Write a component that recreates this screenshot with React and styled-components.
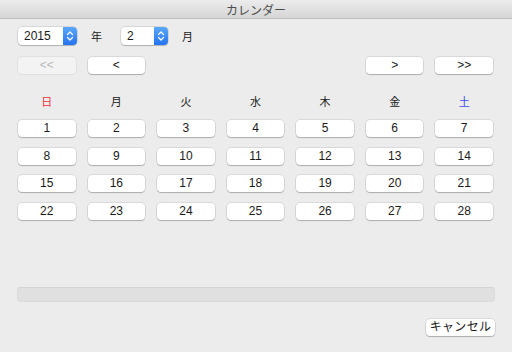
import React from "react";
import styled, { createGlobalStyle } from "styled-components";

const Global = createGlobalStyle`
  html, body { margin: 0; padding: 0; }
  body {
    width: 512px; height: 352px; overflow: hidden;
    background: #ececec;
    font-family: "Liberation Sans", "Noto Sans CJK JP", sans-serif;
    color: #1a1a1a;
  }
`;

const Window = styled.div`
  width: 512px;
  height: 352px;
  display: flex;
  flex-direction: column;
  background: #ececec;
`;

const TitleBar = styled.div`
  height: 18px;
  border-bottom: 1px solid #bdbdbd;
  background: linear-gradient(#ececec, #d6d6d6);
  display: flex;
  align-items: center;
  justify-content: center;
  font-size: 12px;
  color: #4a4a4a;
  flex-shrink: 0;
`;

const Content = styled.div`
  padding: 8px 17px 0 18px;
  display: flex;
  flex-direction: column;
`;

const SelectRow = styled.div`
  display: flex;
  align-items: center;
  height: 18px;
`;

const Select = styled.div`
  width: ${(p) => p.$w}px;
  height: 18px;
  box-sizing: border-box;
  display: flex;
  background: #fff;
  border-radius: 4px;
  box-shadow: 0 0 0 0.5px rgba(0, 0, 0, 0.18), 0 1px 1px rgba(0, 0, 0, 0.18);
  overflow: hidden;
  margin-right: ${(p) => p.$mr}px;
`;

const SelectValue = styled.div`
  flex: 1;
  font-size: 12px;
  line-height: 18px;
  padding-left: 6px;
`;

const Stepper = styled.div`
  width: 14px;
  background: linear-gradient(#5aa8fb, #2473f0);
  display: flex;
  align-items: center;
  justify-content: center;
`;

const Unit = styled.span`
  font-size: 11px;
  margin-right: ${(p) => p.$mr}px;
`;

const NavRow = styled.div`
  margin-top: 12px;
  display: grid;
  grid-template-columns: repeat(7, 1fr);
  column-gap: 12px;
  width: 475px;
`;

const Btn = styled.div`
  height: 17px;
  box-sizing: border-box;
  border-radius: 4px;
  background: ${(p) => (p.$disabled ? "#f3f3f3" : "#fff")};
  color: ${(p) => (p.$disabled ? "#b8b8b8" : "#1a1a1a")};
  box-shadow: ${(p) =>
    p.$disabled
      ? "0 0 0 0.5px rgba(0,0,0,0.1)"
      : "0 0 0 0.5px rgba(0,0,0,0.16), 0 1px 1px rgba(0,0,0,0.2)"};
  font-size: 12px;
  line-height: 17px;
  text-align: center;
  grid-column: ${(p) => p.$col || "auto"};
`;

const HeaderRow = styled.div`
  margin-top: 21px;
  display: grid;
  grid-template-columns: repeat(7, 1fr);
  column-gap: 12px;
  width: 475px;
`;

const DayName = styled.div`
  height: 14px;
  line-height: 14px;
  font-size: 11px;
  text-align: center;
  color: ${(p) => p.$color};
`;

const DayGrid = styled.div`
  margin-top: 11px;
  display: grid;
  grid-template-columns: repeat(7, 1fr);
  column-gap: 12px;
  row-gap: 10.5px;
  width: 475px;
`;

const Progress = styled.div`
  margin-top: 67px;
  margin-left: -1px;
  width: 478px;
  height: 15px;
  box-sizing: border-box;
  border-radius: 4px;
  background: #e0e0e0;
  border: 1px solid #dadada;
  border-top-color: #d4d4d4;
`;

const Footer = styled.div`
  margin-top: 17px;
  display: flex;
  justify-content: flex-end;
  width: 477px;
`;

const CancelBtn = styled.div`
  width: 69px;
  height: 17px;
  border-radius: 4px;
  background: #fff;
  box-shadow: 0 0 0 0.5px rgba(0,0,0,0.16), 0 1px 1px rgba(0,0,0,0.2);
  font-size: 12px;
  line-height: 17px;
  text-align: center;
  letter-spacing: 0.3px;
`;

const Arrows = () => (
  <svg width="8" height="12" viewBox="0 0 8 12">
    <path d="M1.5 4.5 L4 2 L6.5 4.5 M1.5 7.5 L4 10 L6.5 7.5" fill="none" stroke="#fff" strokeWidth="1.3" strokeLinecap="round" strokeLinejoin="round" />
  </svg>
);

const days = ["日", "月", "火", "水", "木", "金", "土"];
const dayColor = (i) => (i === 0 ? "#f0303a" : i === 6 ? "#3f4cf2" : "#1a1a1a");

export default function App() {
  const nums = Array.from({ length: 28 }, (_, i) => i + 1);
  return (
    <Window>
      <Global />
      <TitleBar>カレンダー</TitleBar>
      <Content>
        <SelectRow>
          <Select $w={59} $mr={14}>
            <SelectValue>2015</SelectValue>
            <Stepper><Arrows /></Stepper>
          </Select>
          <Unit $mr={19}>年</Unit>
          <Select $w={47} $mr={14}>
            <SelectValue>2</SelectValue>
            <Stepper><Arrows /></Stepper>
          </Select>
          <Unit>月</Unit>
        </SelectRow>
        <NavRow>
          <Btn $disabled>&lt;&lt;</Btn>
          <Btn>&lt;</Btn>
          <Btn $col={6}>&gt;</Btn>
          <Btn>&gt;&gt;</Btn>
        </NavRow>
        <HeaderRow>
          {days.map((d, i) => (
            <DayName key={d} $color={dayColor(i)}>{d}</DayName>
          ))}
        </HeaderRow>
        <DayGrid>
          {nums.map((n) => (
            <Btn key={n}>{n}</Btn>
          ))}
        </DayGrid>
        <Progress />
        <Footer>
          <CancelBtn>キャンセル</CancelBtn>
        </Footer>
      </Content>
    </Window>
  );
}
